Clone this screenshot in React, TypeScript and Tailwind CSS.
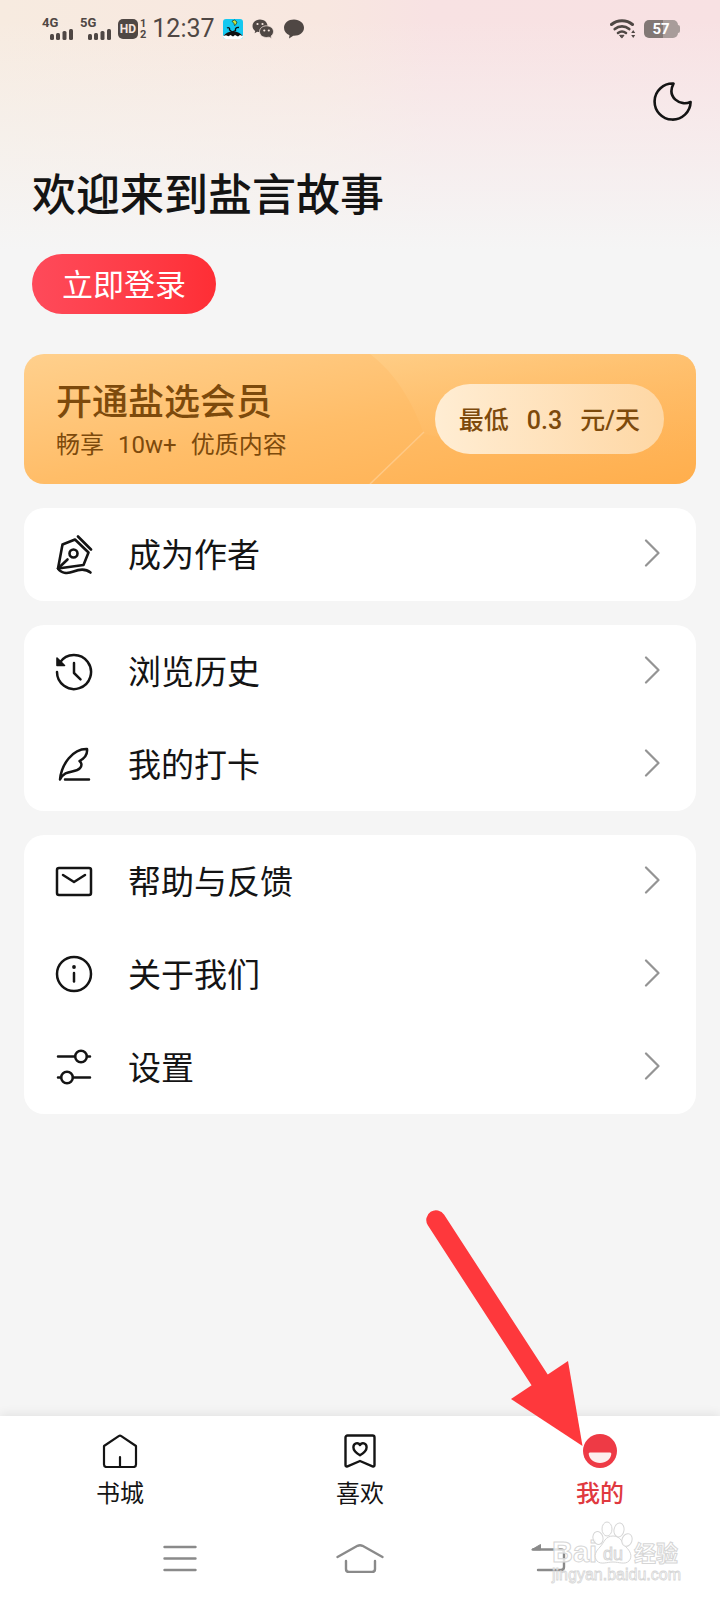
import React from 'react';

const strokeProps = {
  fill: 'none',
  stroke: 'currentColor',
  strokeWidth: 2.2,
  strokeLinecap: 'round' as const,
  strokeLinejoin: 'round' as const,
};

function Signal({ label }: { label: string }) {
  return (
    <div className="flex w-8 flex-col">
      <span className="text-[13px] leading-[10px] font-bold">{label}</span>
      <svg viewBox="0 0 24 12" className="ml-2 h-3 w-6" fill="currentColor">
        <rect x="0" y="6" width="4" height="6" rx="1.5" />
        <rect x="6" y="5" width="4" height="7" rx="1.5" />
        <rect x="12.5" y="3" width="4" height="9" rx="1.5" />
        <rect x="19" y="1" width="4" height="11" rx="1.5" />
      </svg>
    </div>
  );
}

function ReaderAppIcon() {
  return (
    <svg viewBox="0 0 20 20" className="h-5 w-5">
      <rect width="20" height="20" rx="3" fill="#14c8f0" />
      <path d="M0 17c3-2.500 6-3.500 10-3.500s7 1 10 3.500a3 3 0 0 1-3 3H3a3 3 0 0 1-3-3z" fill="#fff" />
      <path d="M.5 17c1.500-2.500 5-4.500 9.500-4.500s8 2 9.500 4.500l-2.500-1-2 1.500-3-1.500-2 1.500-2.500-1.500-2 1.200-2.500-1z" fill="#101010" />
      <path d="M4 9c2-1 3 .5 2.500 1.800L9 13l3.500-1.500c-.5-2 1-3.500 3.500-3" fill="none" stroke="#101010" strokeWidth="1.3" />
      <path d="M9 2.200L11.500 1 14 3l-1 2.500-1.500 1L11 4.500z" fill="#c5ea3f" stroke="#101010" strokeWidth=".6" />
    </svg>
  );
}

function WechatIcon() {
  return (
    <svg viewBox="0 0 22 20" className="h-5 w-[22px]">
      <path d="M8 .5C3.800.5.500 3.300.500 6.900c0 2 1 3.700 2.700 5L2.600 14.200l2.600-1.400c.8.300 1.800.4 2.800.4 4.200 0 7.500-2.700 7.500-6.300S12.200.5 8 .5z" fill="currentColor" />
      <path d="M14.500 6.800c3.900 0 7 2.600 7 5.900 0 1.800-.9 3.300-2.400 4.400l.5 2.400-2.500-1.300c-.8.200-1.700.3-2.600.3-3.900 0-7-2.500-7-5.800s3.100-5.900 7-5.900z" fill="currentColor" stroke="#f6e6df" strokeWidth=".8" />
      <circle cx="5.500" cy="5" r="1.100" fill="#f6e6df" />
      <circle cx="10.500" cy="5" r="1.100" fill="#f6e6df" />
      <circle cx="12.300" cy="11.500" r="1.100" fill="#f6e6df" />
      <circle cx="16.800" cy="11.500" r="1.100" fill="#f6e6df" />
    </svg>
  );
}

function BubbleIcon() {
  return (
    <svg viewBox="0 0 22 20" className="h-5 w-[22px]" fill="currentColor">
      <path d="M11 .5C5.300.5 1 4 1 8.800c0 3.500 2.200 6.200 5.500 7.500L6 19.500l4.300-2.700H11c5.700 0 10-3.300 10-8S16.700.5 11 .5z" />
    </svg>
  );
}

function WifiIcon() {
  return (
    <svg viewBox="0 0 26 20" className="h-5 w-[26px]" fill="none" stroke="currentColor" strokeLinecap="round">
      <path d="M1.500 5.500c6-5 15-5 21 0" strokeWidth="3" />
      <path d="M4.800 10c4.300-3.600 10.100-3.600 14.400 0" strokeWidth="2.800" />
      <path d="M8 14c2.500-1.900 5.500-1.900 8 0" strokeWidth="2.600" />
      <path d="M10 16.300h4l-2 2.500z" fill="currentColor" strokeWidth="1" />
      <path d="M21.200 14l2-3 2 3zM21.200 16l2 3 2-3z" fill="currentColor" stroke="none" />
    </svg>
  );
}

function MoonIcon() {
  return (
    <svg viewBox="0 0 40 40" className="h-10 w-10" {...strokeProps} strokeWidth={2.6}>
      <path d="M21.500 1.600A18 18 0 1 0 38.600 20C28 24.700 14.500 15.200 21.500 1.600z" />
    </svg>
  );
}

function PenIcon() {
  return (
    <svg viewBox="0 0 40 40" className="h-10 w-10" {...strokeProps} strokeWidth={2.6}>
      <path d="M8.500 9.500L21 4.500 34.500 17.500 29.500 30 4 33.500z" />
      <path d="M24 1.500l13 13" />
      <circle cx="19.500" cy="18.500" r="4" />
      <path d="M4 33.500l9.500-9M4 33.500c3 4.500 9 5.500 15.500 3s12-3 17 1" />
    </svg>
  );
}

function HistoryIcon() {
  return (
    <svg viewBox="0 0 40 40" className="h-10 w-10" {...strokeProps} strokeWidth={2.5}>
      <path d="M3 20a17 17 0 1 0 3-9.600" />
      <path d="M3 6v7.500h7.500z" fill="currentColor" strokeWidth={1.6} />
      <path d="M20 11v10l6.500 6.300" />
    </svg>
  );
}

function QuillIcon() {
  return (
    <svg viewBox="0 0 40 40" className="h-10 w-10" {...strokeProps} strokeWidth={2.5}>
      <path d="M6 34.500C7.500 19 19 3.500 33 4c.5 4-1.500 9-7.500 12 2.500 2 2.500 5 .5 7.200C21 28.500 11 24 6 34.500zM11 34.500h24" />
    </svg>
  );
}

function MailIcon() {
  return (
    <svg viewBox="0 0 40 40" className="h-10 w-10" {...strokeProps} strokeWidth={2.5}>
      <rect x="3" y="6" width="34" height="27" rx="2" />
      <path d="M9 13l11 7 11-7" />
    </svg>
  );
}

function InfoIcon() {
  return (
    <svg viewBox="0 0 40 40" className="h-10 w-10" {...strokeProps} strokeWidth={2.5}>
      <circle cx="20" cy="19" r="17" />
      <path d="M20 18v8.500" />
      <circle cx="20" cy="12" r="1.900" fill="currentColor" stroke="none" />
    </svg>
  );
}

function SlidersIcon() {
  return (
    <svg viewBox="0 0 40 40" className="h-10 w-10" {...strokeProps} strokeWidth={2.5}>
      <path d="M4 8.500h17M33 8.500h3M4 29.500h3M19 29.500h17" />
      <circle cx="27" cy="8.500" r="5.800" />
      <circle cx="13" cy="29.500" r="5.800" />
    </svg>
  );
}

function ChevronIcon() {
  return (
    <svg viewBox="0 0 16 32" className="h-8 w-4 text-[#949494]" {...strokeProps}>
      <path d="M2 1.500l12.500 12.500L2 26.500" />
    </svg>
  );
}

function HouseIcon() {
  return (
    <svg viewBox="0 0 36 34" className="h-[34px] w-9" {...strokeProps}>
      <path d="M2 12L16.700 2.100q1.300-.8 2.600 0L34 12v18.500a2.500 2.500 0 0 1-2.500 2.500h-27A2.500 2.500 0 0 1 2 30.500zM18 23v10" />
    </svg>
  );
}

function FavoriteIcon() {
  return (
    <svg viewBox="0 0 36 34" className="h-[34px] w-9" {...strokeProps} strokeWidth={2.4}>
      <path d="M3.500 3.500a2 2 0 0 1 2-2h25a2 2 0 0 1 2 2V31q0 2-2 1.300L18 27 5.500 32.300q-2 .7-2-1.300z" />
      <path d="M18 21.300c-3.500-2-6.600-4.500-6.600-8 0-4.300 4.700-5.200 6.600-2.300 1.900-2.900 6.600-2 6.600 2.300 0 3.500-3.100 6-6.600 8z" />
    </svg>
  );
}

function FaceIcon() {
  return (
    <svg viewBox="0 0 34 34" className="h-[34px] w-[34px]">
      <circle cx="17" cy="17" r="17" fill="#ee3a45" />
      <path d="M7 18.500h20a1.300 1.300 0 0 1 1.300 1.500C27.500 25.500 23 29 17 29S6.500 25.500 5.700 20A1.300 1.300 0 0 1 7 18.500z" fill="#fdeeee" />
    </svg>
  );
}

function PointerArrow() {
  return (
    <svg
      viewBox="424 1208 159 240"
      className="pointer-events-none absolute right-full bottom-5 h-[240px] w-[159px]"
      fill="#fe383c"
    >
      <path d="M436 1220L541 1382" stroke="#fe383c" strokeWidth="19.500" strokeLinecap="round" />
      <path d="M568 1361L511 1399 582.500 1446z" />
    </svg>
  );
}

function Watermark() {
  return (
    <svg
      viewBox="0 0 140 70"
      className="pointer-events-none absolute right-8 bottom-3 h-[70px] w-[140px] [font-family:'Liberation_Sans','Noto_Sans_CJK_SC',sans-serif]"
      fill="#ffffff"
      fillOpacity=".8"
      stroke="#d6d6d6"
      strokeWidth="1"
    >
      <text x="4" y="44" fontSize="29" fontWeight="700">Bai</text>
      <path d="M65 18c8 0 9 7 13 11s7 9 3 14c-4 4-10 1-16 1s-12 3-16-1c-4-5-1-10 3-14s5-11 13-11z" />
      <ellipse cx="50" cy="20" rx="5" ry="6.500" transform="rotate(-15 50 20)" />
      <ellipse cx="59" cy="11" rx="5" ry="7" />
      <ellipse cx="71" cy="12" rx="5" ry="7" transform="rotate(10 71 12)" />
      <ellipse cx="79" cy="22" rx="5" ry="6.500" transform="rotate(20 79 22)" />
      <text x="55" y="42" fontSize="18">du</text>
      <text x="86" y="43" fontSize="22" fontWeight="700">经验</text>
      <text x="4" y="62" fontSize="16" strokeWidth=".8">jingyan.baidu.com</text>
    </svg>
  );
}

const groups: { label: string; Icon: React.FC }[][] = [
  [{ label: '成为作者', Icon: PenIcon }],
  [
    { label: '浏览历史', Icon: HistoryIcon },
    { label: '我的打卡', Icon: QuillIcon },
  ],
  [
    { label: '帮助与反馈', Icon: MailIcon },
    { label: '关于我们', Icon: InfoIcon },
    { label: '设置', Icon: SlidersIcon },
  ],
];

function StatusBar() {
  return (
    <div className="flex h-[58px] items-center justify-between pr-10 pl-[42px] text-[#4f4744]">
      <div className="flex items-center">
        <Signal label="4G" />
        <div className="ml-1.5">
          <Signal label="5G" />
        </div>
        <span className="ml-1.5 flex h-5 w-5 items-center justify-center rounded-[5px] bg-[#4f4744] text-[12px] leading-none font-bold text-[#f6e6df]">
          HD
        </span>
        <span className="ml-0.5 flex flex-col text-[11px] leading-[11px] font-bold">
          <span>1</span>
          <span>2</span>
        </span>
        <span className="ml-1.5 text-[25px] leading-7">12:37</span>
        <div className="ml-2 flex items-center gap-[9px]">
          <ReaderAppIcon />
          <WechatIcon />
          <BubbleIcon />
        </div>
      </div>
      <div className="flex items-center gap-2">
        <WifiIcon />
        <div className="flex items-center">
          <span className="flex h-[18px] w-[34px] items-center justify-center rounded-[5px] bg-linear-to-r from-[#827875] from-55% to-[#a89c9a] to-55% text-[15px] leading-none font-bold text-white">
            57
          </span>
          <span className="h-2 w-0.5 rounded-r bg-[#a89c9a]" />
        </div>
      </div>
    </div>
  );
}

export default function App() {
  return (
    <div className="flex min-h-screen flex-col bg-[#f5f5f5] text-[#141414] [font-family:Roboto,'Noto_Sans_CJK_SC',sans-serif]">
      <header className="bg-[linear-gradient(to_bottom,transparent_20px,#f5f5f5_250px),linear-gradient(to_right,#f7ebe0,#f8e7e0_45%,#f8e2e3_60%,#f8e1e3)]">
        <StatusBar />
        <div className="flex justify-end px-7 pt-6">
          <button type="button" aria-label="夜间模式">
            <MoonIcon />
          </button>
        </div>
        <div className="mt-11 px-8">
          <h1 className="text-[44px] leading-[60px] font-medium">欢迎来到盐言故事</h1>
          <button
            type="button"
            className="mt-7 h-[60px] rounded-full bg-linear-to-r from-[#fe4a5a] to-[#fe2e35] px-[30px] pt-0.5 text-[31px] leading-none text-white"
          >
            立即登录
          </button>
        </div>
      </header>

      <main className="mt-10 flex flex-col gap-6 px-6">
        <section className="relative flex h-[130px] items-center justify-between overflow-hidden rounded-[20px] bg-linear-to-br from-[#ffd08d] via-[#ffbd68] to-[#ffae4c] px-8 text-[#7d4a0c]">
          <svg viewBox="0 0 330 130" className="absolute top-0 right-0 h-full w-[330px]">
            <defs>
              <linearGradient id="sheen" x1="0" y1="0" x2="0.4" y2="1">
                <stop offset="0" stopColor="#ffd08a" stopOpacity=".75" />
                <stop offset="1" stopColor="#ffb45a" stopOpacity="0" />
              </linearGradient>
            </defs>
            <path d="M4 0C28 18 46 46 58 80L330 130V0z" fill="url(#sheen)" />
            <path d="M58 78L4 130" stroke="#ffc986" strokeWidth="1.500" />
          </svg>
          <div className="relative pt-1">
            <h2 className="text-[36px] leading-[48px] font-medium">开通盐选会员</h2>
            <p className="flex gap-3.5 text-[24px] leading-9">
              <span>畅享</span>
              <span>10w+</span>
              <span>优质内容</span>
            </p>
          </div>
          <button
            type="button"
            className="relative flex h-[70px] items-center gap-[18px] rounded-full bg-linear-to-r from-[#ffedd3] to-[#fed7a4] px-6 pt-0.5 text-[25px] leading-none font-medium"
          >
            <span>最低</span>
            <span>0.3</span>
            <span>元/天</span>
          </button>
        </section>

        {groups.map((items) => (
          <nav key={items[0].label} className="rounded-[20px] bg-white">
            {items.map(({ label, Icon }) => (
              <a key={label} href="#" className="flex h-[93px] items-center pr-9 pl-[30px]">
                <Icon />
                <span className="ml-[34px] flex-1 pt-0.5 text-[33px] leading-[48px]">{label}</span>
                <ChevronIcon />
              </a>
            ))}
          </nav>
        ))}
      </main>

      <footer className="relative mt-auto bg-white shadow-[0_-2px_10px_rgba(0,0,0,0.08)]">
        <nav className="grid grid-cols-3 pt-[18px] text-[24px] leading-9">
          <a href="#" className="flex flex-col items-center gap-2">
            <HouseIcon />
            <span>书城</span>
          </a>
          <a href="#" className="flex flex-col items-center gap-2">
            <FavoriteIcon />
            <span>喜欢</span>
          </a>
          <a href="#" className="flex flex-col items-center gap-2 font-medium text-[#e0393f]">
            <span className="relative">
              <FaceIcon />
              <PointerArrow />
            </span>
            <span>我的</span>
          </a>
        </nav>
        <div className="grid h-[88px] grid-cols-3 items-center justify-items-center px-[12.5%] pt-1 text-[#8a8a8a]">
          <button type="button" aria-label="菜单">
            <svg viewBox="0 0 34 30" className="h-[30px] w-[34px]" {...strokeProps} strokeWidth={2.4}>
              <path d="M1.500 4h31M1.500 15.500h31M1.500 27h31" />
            </svg>
          </button>
          <button type="button" aria-label="主页">
            <svg viewBox="0 0 48 30" className="h-[30px] w-12" {...strokeProps} strokeWidth={2.4}>
              <path d="M1.500 14L21.500 2.800q2.500-1.200 5 0L46.500 14M10 18v8q0 3 3 3h23q3 0 3-3v-8" />
            </svg>
          </button>
          <button type="button" aria-label="返回">
            <svg viewBox="-16 0 54 30" className="h-[30px] w-[54px]" {...strokeProps} strokeWidth={2.4}>
              <path d="M4 6.500h28q3 0 3 3v14.500q0 3-3 3H9" />
              <path d="M3 6.500l8.500-5v5z" fill="currentColor" strokeWidth="1" />
            </svg>
          </button>
        </div>
        <Watermark />
      </footer>
    </div>
  );
}
